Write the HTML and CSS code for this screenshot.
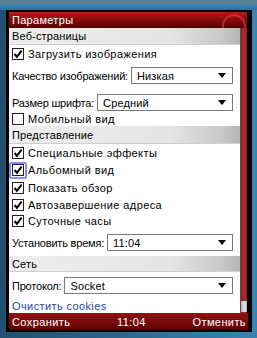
FILE: index.html
```html
<!DOCTYPE html>
<html lang="ru">
<head>
<meta charset="utf-8">
<title>Параметры</title>
<link rel="stylesheet" href="styles.css">
</head>
<body>
<div class="device">
  <div class="screen">
    <div class="titlebar"><span>Параметры</span></div>
    <div class="main">
      <div class="content">
        <div class="header">Веб-страницы</div>
        <div class="row check-row"><span class="cb"><svg viewBox="0 0 12 12" width="12" height="12"><rect x="0.5" y="0.5" width="11" height="11" fill="#fff" stroke="#222"/><path d="M2.6 6 L4.9 8.8 L9.6 2.6" fill="none" stroke="#000" stroke-width="2"/></svg></span><span class="label">Загрузить изображения</span></div>
        <div class="row sel-row sr1"><span class="label">Качество изображений:</span><div class="select"><span>Низкая</span><i class="arrow"></i></div></div>
        <div class="row sel-row sr2"><span class="label">Размер шрифта:</span><div class="select"><span>Средний</span><i class="arrow"></i></div></div>
        <div class="row check-row mob"><span class="cb"><svg viewBox="0 0 12 12" width="12" height="12"><rect x="0.5" y="0.5" width="11" height="11" fill="#fff" stroke="#222"/></svg></span><span class="label">Мобильный вид</span></div>
        <div class="header h2">Представление</div>
        <div class="row check-row"><span class="cb"><svg viewBox="0 0 12 12" width="12" height="12"><rect x="0.5" y="0.5" width="11" height="11" fill="#fff" stroke="#222"/><path d="M2.6 6 L4.9 8.8 L9.6 2.6" fill="none" stroke="#000" stroke-width="2"/></svg></span><span class="label">Специальные эффекты</span></div>
        <div class="row check-row focus-row"><span class="cb focus"><svg viewBox="0 0 12 12" width="12" height="12"><rect x="0.5" y="0.5" width="11" height="11" fill="#fff" stroke="#222"/><path d="M2.6 6 L4.9 8.8 L9.6 2.6" fill="none" stroke="#000" stroke-width="2"/></svg></span><span class="label">Альбомный вид</span></div>
        <div class="row check-row"><span class="cb"><svg viewBox="0 0 12 12" width="12" height="12"><rect x="0.5" y="0.5" width="11" height="11" fill="#fff" stroke="#222"/><path d="M2.6 6 L4.9 8.8 L9.6 2.6" fill="none" stroke="#000" stroke-width="2"/></svg></span><span class="label">Показать обзор</span></div>
        <div class="row check-row"><span class="cb"><svg viewBox="0 0 12 12" width="12" height="12"><rect x="0.5" y="0.5" width="11" height="11" fill="#fff" stroke="#222"/><path d="M2.6 6 L4.9 8.8 L9.6 2.6" fill="none" stroke="#000" stroke-width="2"/></svg></span><span class="label">Автозавершение адреса</span></div>
        <div class="row check-row last-check"><span class="cb"><svg viewBox="0 0 12 12" width="12" height="12"><rect x="0.5" y="0.5" width="11" height="11" fill="#fff" stroke="#222"/><path d="M2.6 6 L4.9 8.8 L9.6 2.6" fill="none" stroke="#000" stroke-width="2"/></svg></span><span class="label">Суточные часы</span></div>
        <div class="row sel-row sr3"><span class="label">Установить время:</span><div class="select"><span>11:04</span><i class="arrow"></i></div></div>
        <div class="header h3">Сеть</div>
        <div class="row sel-row sr4"><span class="label">Протокол:</span><div class="select"><span>Socket</span><i class="arrow"></i></div></div>
        <div class="row link-row"><span class="link">Очистить cookies</span></div>
      </div>
      <div class="scrollbar"><div class="thumb"></div></div>
    </div>
    <div class="softkeys"><span>Сохранить</span><span>11:04</span><span>Отменить</span></div>
  </div>
</div>
</body>
</html>
```
FILE: styles.css
```css
* { box-sizing: border-box; }
html, body { margin: 0; padding: 0; }
body {
  width: 257px;
  height: 338px;
  overflow: hidden;
  font-family: "Liberation Sans", Arial, sans-serif;
  font-size: 11px;
  letter-spacing: 0.15px;
  color: #000;
}
.device {
  width: 257px;
  height: 338px;
  padding: 10px 5px 6px 6px;
  background:
    linear-gradient(#5d7f93 0, #5d7f93 4px, #3f88b8 4px, #2f6f9a 10px, transparent 10px),
    linear-gradient(to right, #23506e 0, #2b6389 40%, #3a84b2 100%);
}
.screen {
  height: 100%;
  display: flex;
  flex-direction: column;
  border-style: solid;
  border-color: #000;
  border-width: 2px 5px 2px 3px;
  background: #000;
}
.titlebar {
  position: relative;
  height: 16px;
  flex: none;
  display: flex;
  align-items: center;
  padding-left: 3px;
  color: #fff;
  letter-spacing: 0.3px;
  background: linear-gradient(#b51c1c 0%, #8e0c0c 45%, #6a0303 80%, #4e0000 100%);
  overflow: hidden;
}
.titlebar::after {
  content: "";
  position: absolute;
  right: 1px;
  top: 2px;
  width: 20px;
  height: 20px;
  border-radius: 50%;
  border: 2px solid rgba(220, 70, 70, 0.55);
}
.main {
  flex: 1;
  display: flex;
  min-height: 0;
}
.content {
  flex: 1;
  background: #fff;
  display: flex;
  flex-direction: column;
  border-right: 1px solid #555;
}
.scrollbar {
  width: 6px;
  flex: none;
  background: linear-gradient(to right, #7d1414, #b03030 40%, #951c1c);
  display: flex;
  flex-direction: column;
  justify-content: flex-end;
  padding-bottom: 1px;
}
.thumb {
  height: 11px;
  background: linear-gradient(to right, #aaa, #e6e6e6 50%, #bdbdbd);
}
.header {
  height: 17px;
  flex: none;
  display: flex;
  align-items: center;
  padding-left: 3px;
  background: linear-gradient(to right, #eeeeee 0%, #e4e4e4 70%, #c9c9c9 92%, #b5b5b5 100%);
  border-bottom: 1px solid #d0d0d0;
}
.h2 { height: 18px; }
.h3 { height: 16px; }
.row {
  flex: none;
  display: flex;
  align-items: center;
  padding-right: 7px;
}
.check-row { height: 17px; }
.mob { height: 15px; }
.focus-row { height: 18px; }
.last-check { height: 16px; }
.cb {
  width: 18px;
  height: 17px;
  flex: none;
  display: flex;
  align-items: center;
  justify-content: center;
  border: 2px solid transparent;
  border-radius: 2px;
}
.cb svg { display: block; }
.cb.focus { border-color: #8c8ce6; }
.check-row .label { margin-left: 1px; letter-spacing: 0.4px; }
.sel-row { padding-left: 3px; padding-top: 5px; padding-bottom: 5px; }
.sr2 { padding-bottom: 0; }
.sr4 { padding-bottom: 4px; }
.sel-row .label { margin-right: 3px; white-space: nowrap; letter-spacing: -0.2px; }
.select {
  flex: 1;
  height: 17px;
  border: 1px solid #7a7a7a;
  background: #fff;
  display: flex;
  align-items: center;
  justify-content: space-between;
  padding: 0 6px 0 5px;
}
.arrow {
  width: 0;
  height: 0;
  border-left: 4px solid transparent;
  border-right: 4px solid transparent;
  border-top: 5px solid #000;
}
.link-row { height: 15px; padding-left: 3px; }
.link { color: #24479a; letter-spacing: 0.4px; }
.softkeys {
  height: 17px;
  flex: none;
  display: flex;
  align-items: center;
  justify-content: space-between;
  padding: 0 2px 0 3px;
  color: #fff;
  letter-spacing: 0.4px;
  margin-right: -1px;
  background: linear-gradient(#8e1414 0%, #7a0a0a 50%, #5c0202 100%);
}
```
